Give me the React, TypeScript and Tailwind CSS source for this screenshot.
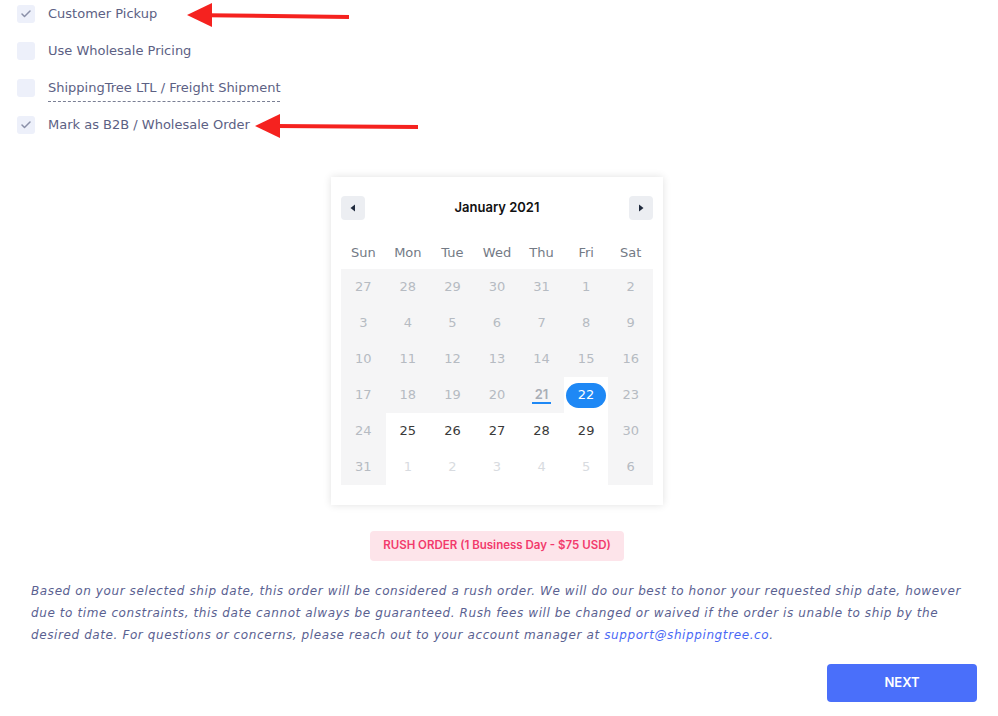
import { Check } from 'lucide-react';

type Day = { n: number; kind: 'off' | 'on' | 'next' | 'today' | 'selected' };

const options = [
  { label: 'Customer Pickup', checked: true, dashed: false },
  { label: 'Use Wholesale Pricing', checked: false, dashed: false },
  { label: 'ShippingTree LTL / Freight Shipment', checked: false, dashed: true },
  { label: 'Mark as B2B / Wholesale Order', checked: true, dashed: false },
];

const weekDays = ['Sun', 'Mon', 'Tue', 'Wed', 'Thu', 'Fri', 'Sat'];

const buildDays = (): Day[] => {
  const days: Day[] = [];
  [27, 28, 29, 30, 31].forEach((n) => days.push({ n, kind: 'off' }));
  for (let n = 1; n <= 31; n++) {
    let kind: Day['kind'] = 'off';
    if (n === 21) kind = 'today';
    else if (n === 22) kind = 'selected';
    else if (n >= 25 && n <= 29) kind = 'on';
    days.push({ n, kind });
  }
  for (let n = 1; n <= 6; n++) days.push({ n, kind: n === 6 ? 'off' : 'next' });
  return days;
};

const DayCell = ({ day, col }: { day: Day; col: number }) => {
  const weekend = col === 0 || col === 6;
  const grey = day.kind === 'off' || day.kind === 'today' || (weekend && day.kind !== 'selected');
  return (
    <div
      className={`h-9 flex items-center justify-center text-[13px] ${grey ? 'bg-[#f5f5f6]' : 'bg-white'}`}
    >
      {day.kind === 'selected' ? (
        <span className="w-10 h-[25px] rounded-full bg-[#1e88f5] text-white flex items-center justify-center">
          {day.n}
        </span>
      ) : day.kind === 'today' ? (
        <span className="text-[#a9aeb6] font-semibold border-b-2 border-[#1e88f5] px-[3px] leading-[16px] font-['Inter']">
          {day.n}
        </span>
      ) : (
        <span
          className={
            day.kind === 'on' ? 'text-[#3a3a3a]' : day.kind === 'next' ? 'text-[#d8dbe0]' : 'text-[#b6bbc2]'
          }
        >
          {day.n}
        </span>
      )}
    </div>
  );
};

const Calendar = () => {
  const days = buildDays();
  return (
    <div className="w-[332px] bg-white shadow-[0_0_8px_rgba(0,0,0,0.12)] px-[10px] pt-[19px] pb-5">
      <div className="flex items-center justify-between h-6">
        <button className="w-6 h-6 rounded bg-[#eceef2] flex items-center justify-center">
          <svg width="8" height="8" viewBox="0 0 8 8">
            <path d="M6 0.5 L1.5 4 L6 7.5 Z" fill="#1f2a3d" />
          </svg>
        </button>
        <span className="text-[13px] font-semibold text-[#111] font-['Inter']">January 2021</span>
        <button className="w-6 h-6 rounded bg-[#eceef2] flex items-center justify-center">
          <svg width="8" height="8" viewBox="0 0 8 8">
            <path d="M2 0.5 L6.5 4 L2 7.5 Z" fill="#1f2a3d" />
          </svg>
        </button>
      </div>
      <div className="grid grid-cols-7 mt-5 mb-[3px] h-[26px] items-center">
        {weekDays.map((d) => (
          <span key={d} className="text-center text-[13px] text-[#737a85]">
            {d}
          </span>
        ))}
      </div>
      <div className="grid grid-cols-7">
        {days.map((day, i) => (
          <DayCell key={i} day={day} col={i % 7} />
        ))}
      </div>
    </div>
  );
};

const Arrow = ({ tipX, tipY, tailX, tailY }: { tipX: number; tipY: number; tailX: number; tailY: number }) => (
  <svg
    className="absolute left-0 top-0 pointer-events-none"
    width="998"
    height="160"
    viewBox="0 0 998 160"
  >
    <line x1={tipX + 20} y1={tipY + (tailY - tipY) * 0.12} x2={tailX} y2={tailY} stroke="#f5221f" strokeWidth="4" />
    <path d={`M${tipX} ${tipY} L${tipX + 25} ${tipY - 12} L${tipX + 25} ${tipY + 12} Z`} fill="#f5221f" />
  </svg>
);

export default function App() {
  return (
    <div
      className="relative w-[998px] h-[716px] bg-white overflow-hidden"
      style={{ fontFamily: '"DejaVu Sans", "Noto Sans", sans-serif' }}
    >
      <div className="pl-[17px] pt-[5px] flex flex-col gap-[19px]">
        {options.map((o) => (
          <label key={o.label} className="flex items-center gap-[13px] h-[18px]">
            <span className="w-[18px] h-[18px] rounded-[3px] bg-[#edf0fa] flex items-center justify-center">
              {o.checked && <Check className="w-3 h-3 text-[#8a90a8]" strokeWidth={3} />}
            </span>
            <span
              className={`text-[13px] text-[#5c6184] ${o.dashed ? 'border-b border-dashed border-[#7a7f94] pb-[3px] mt-[4px]' : ''}`}
            >
              {o.label}
            </span>
          </label>
        ))}
      </div>

      <Arrow tipX={187} tipY={15} tailX={349} tailY={17} />
      <Arrow tipX={255} tipY={126} tailX={418} tailY={127} />

      <div className="flex justify-center mt-[43px] pr-1">
        <Calendar />
      </div>

      <div className="flex justify-center mt-[26px] pr-1">
        <span className="px-[13px] h-[30px] flex items-center rounded bg-[#fde4ea] text-[#f23a6c] text-[11.5px] font-semibold font-['Inter']">
          RUSH ORDER (1 Business Day - $75 USD)
        </span>
      </div>

      <p className="px-[31px] mt-[19px] text-[12px] italic leading-[22px] tracking-[0.05em] text-[#5a6191] whitespace-nowrap">
        Based on your selected ship date, this order will be considered a rush order. We will do our best to honor
        your requested ship date, however
        <br />
        due to time constraints, this date cannot always be guaranteed. Rush fees will be changed or waived if the
        order is unable to ship by the
        <br />
        desired date. For questions or concerns, please reach out to your account manager at{' '}
        <a className="text-[#4a68f5]">support@shippingtree.co</a>.
      </p>

      <div className="flex justify-end pr-[21px] mt-[18px]">
        <button className="w-[150px] h-[38px] rounded bg-[#4a6ffa] text-white text-[13px] font-semibold font-['Inter']">
          NEXT
        </button>
      </div>
    </div>
  );
}
